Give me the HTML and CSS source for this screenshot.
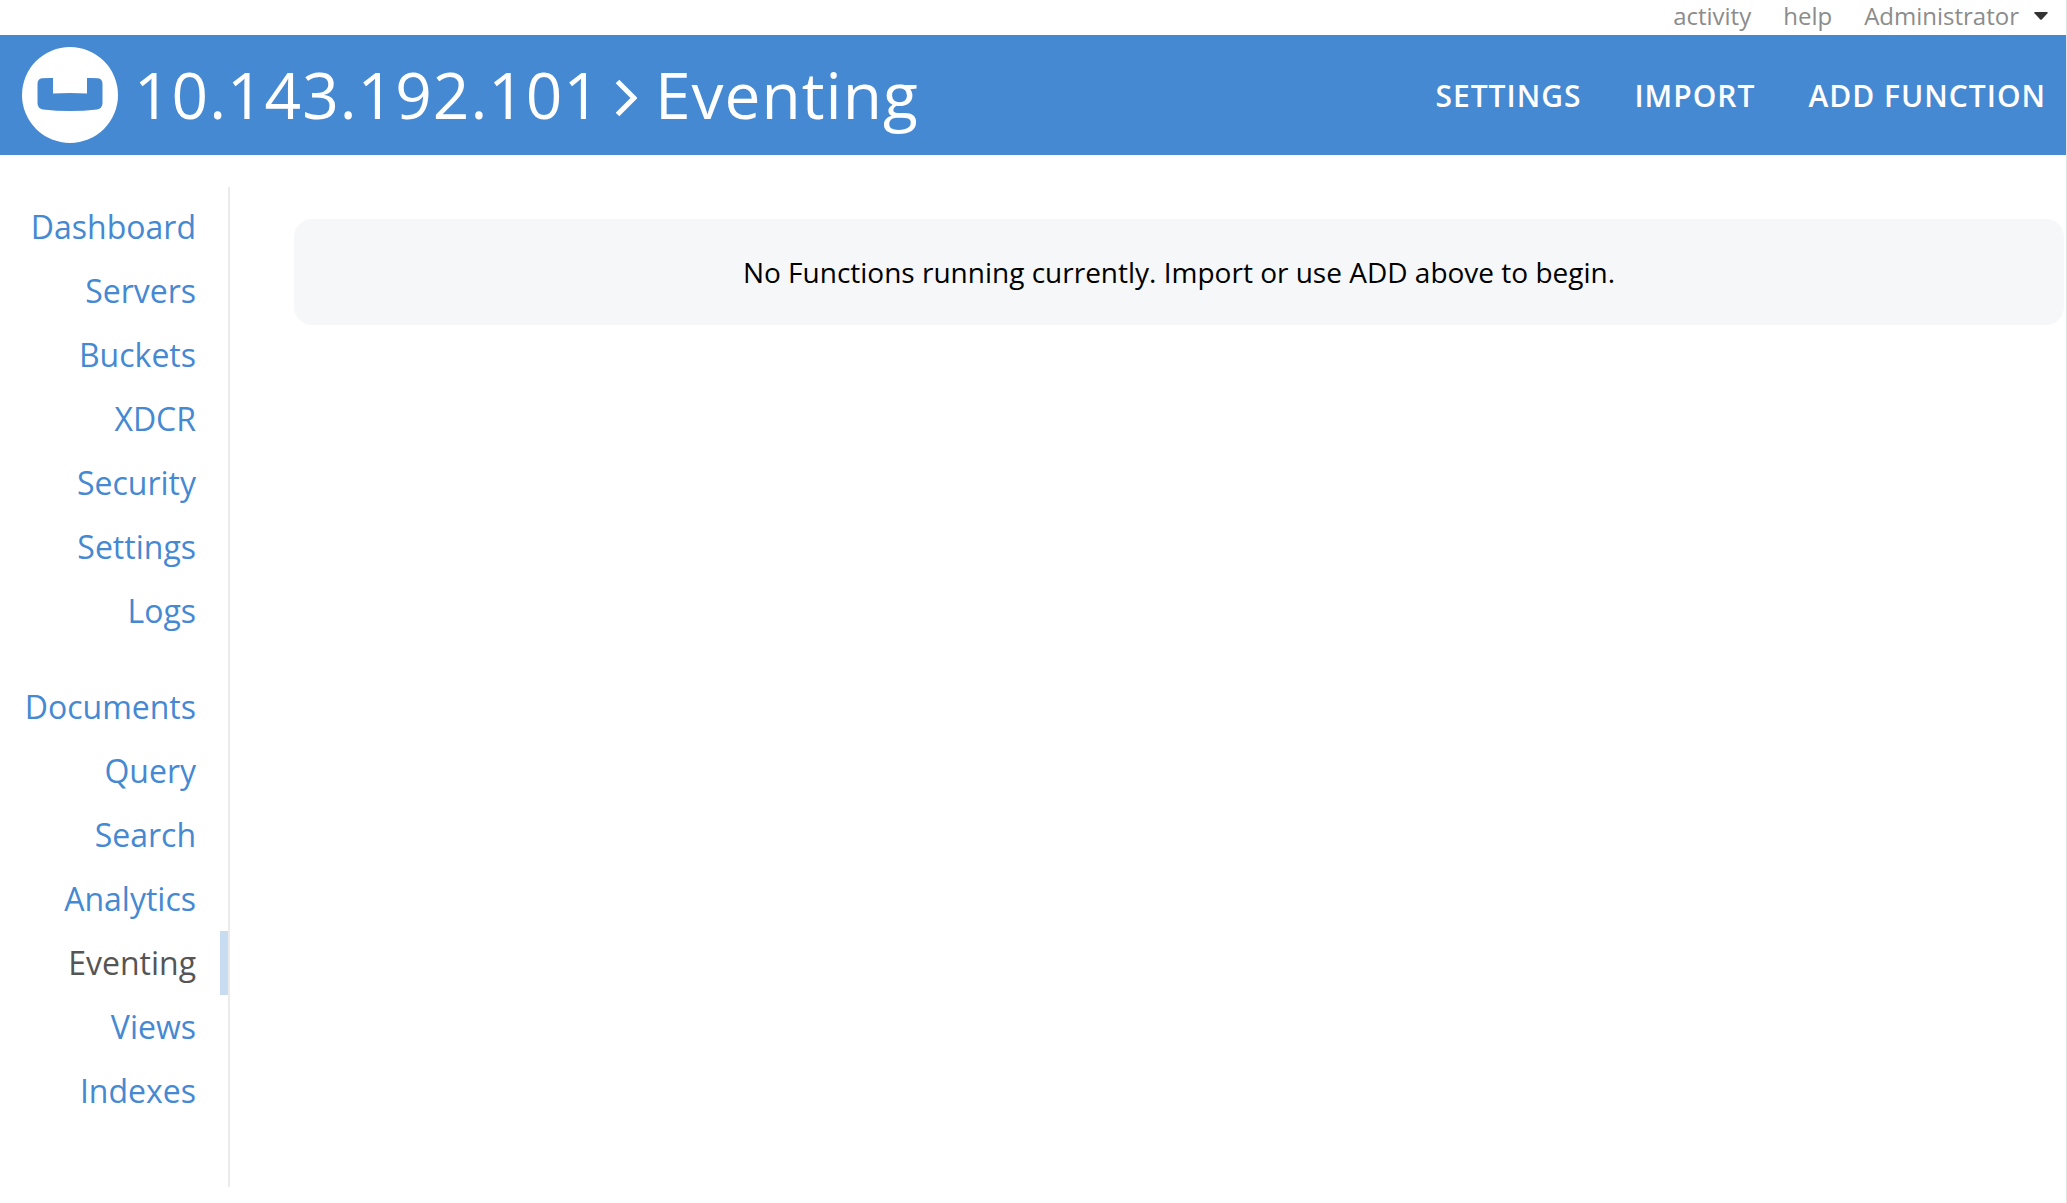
FILE: index.html
```
<!DOCTYPE html>
<html lang="en">
<head>
<meta charset="utf-8">
<title>Eventing</title>
<link rel="stylesheet" href="styles.css">
</head>
<body>
<nav class="utility" aria-label="Account">
  <a href="#activity">activity</a>
  <a href="#help">help</a>
  <button class="user" type="button">Administrator
    <svg class="caret" viewBox="0 0 14 8" aria-hidden="true"><path d="M1 0H13Q14.300 0 13.500 1.300L8 7.300Q7 8.300 6 7.300L.5 1.300Q-.3 0 1 0Z"/></svg>
  </button>
</nav>
<header class="masthead">
  <svg class="logo" viewBox="0 0 96 96" aria-hidden="true">
    <circle cx="48" cy="48" r="48" fill="#fff"/>
    <path fill="#4589d2" d="M15.500 37Q15.500 32 20 31.300Q25 30.800 31 31V46.500Q48 45.300 65 46.500V31Q71 30.800 76 31.300Q80.500 32 80.500 37V56Q80.500 61.500 75 62.500Q48 65.500 21 62.500Q15.500 61.500 15.500 56Z"/>
  </svg>
  <h1 class="title">
    <span>10.143.192.101</span>
    <svg class="chevron" viewBox="0 0 22 38" aria-hidden="true"><path d="M2.500 2.500L19 19L2.500 35.500" fill="none" stroke="#fff" stroke-width="5"/></svg>
    <span>Eventing</span>
  </h1>
  <nav class="actions" aria-label="Functions">
    <a href="#settings">SETTINGS</a>
    <a href="#import">IMPORT</a>
    <a href="#add">ADD FUNCTION</a>
  </nav>
</header>
<div class="layout">
  <nav class="sidebar" aria-label="Main">
    <a href="#dashboard">Dashboard</a>
    <a href="#servers">Servers</a>
    <a href="#buckets">Buckets</a>
    <a href="#xdcr">XDCR</a>
    <a href="#security">Security</a>
    <a href="#cluster-settings">Settings</a>
    <a href="#logs">Logs</a>
    <a class="group-start" href="#documents">Documents</a>
    <a href="#query">Query</a>
    <a href="#search">Search</a>
    <a href="#analytics">Analytics</a>
    <a class="current" aria-current="page" href="#eventing">Eventing</a>
    <a href="#views">Views</a>
    <a href="#indexes">Indexes</a>
  </nav>
  <main class="content">
    <p class="empty">No Functions running currently. Import or use ADD above to begin.</p>
  </main>
</div>
</body>
</html>
```
FILE: styles.css
```
* { box-sizing: border-box; }

body {
  margin: 0;
  min-height: 100vh;
  border-right: 1px solid #e2e2e2;
  background: #fff;
  color: #000;
  font-family: "Open Sans", sans-serif;
  font-size: 28px;
}

a { color: inherit; text-decoration: none; }

.utility {
  display: flex;
  justify-content: flex-end;
  align-items: center;
  gap: 32px;
  height: 35px;
  padding: 0 18px 3px 0;
  color: #8c8c8c;
  font-size: 24px;
  line-height: 32px;
}

.user {
  display: flex;
  align-items: center;
  gap: 15px;
  padding: 0;
  border: 0;
  background: none;
  color: inherit;
  font: inherit;
}

.caret { width: 14px; height: 8px; fill: #333; }

.masthead {
  display: flex;
  align-items: center;
  height: 120px;
  padding: 0 20px 0 22px;
  background: #4589d2;
  color: #fff;
}

.logo { flex: none; width: 96px; height: 96px; }

.title {
  display: flex;
  align-items: center;
  margin: 0 0 0 16px;
  font-size: 64px;
  font-weight: 400;
  line-height: 88px;
  letter-spacing: 1px;
  white-space: nowrap;
}

.chevron { width: 22px; height: 38px; margin: 5px 18px 0 14px; }

.actions {
  display: flex;
  gap: 53px;
  margin-left: auto;
  font-size: 30px;
  font-weight: 600;
  letter-spacing: 1px;
  white-space: nowrap;
}

.layout { display: flex; align-items: flex-start; padding-top: 32px; }

.sidebar {
  flex: none;
  display: flex;
  flex-direction: column;
  width: 230px;
  padding: 8px 0 64px;
  border-right: 2px solid #ebebeb;
  color: #4589d2;
  font-size: 32px;
  line-height: 64px;
  text-align: right;
}

.sidebar a { padding-right: 24px; border-right: 8px solid transparent; }
.sidebar .group-start { margin-top: 32px; }
.sidebar .current { border-right-color: #c7dbf1; color: #555; }

.content { flex: 1; padding: 32px 2px 0 64px; }

.empty {
  margin: 0;
  padding: 32px;
  border-radius: 18px;
  background: #f5f7f9;
  line-height: 42px;
  text-align: center;
}
```
